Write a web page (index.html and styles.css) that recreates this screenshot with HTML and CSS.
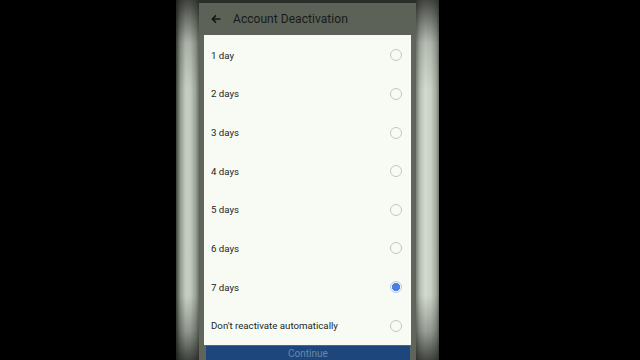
FILE: index.html
```html
<!DOCTYPE html>
<html lang="en">
<head>
<meta charset="utf-8">
<title>Account Deactivation</title>
<link rel="stylesheet" href="styles.css">
</head>
<body>
<div class="stage">
  <div class="side side-left"></div>
  <div class="phone">
    <div class="status"></div>
    <div class="appbar">
      <svg class="back" width="10" height="10" viewBox="0 0 10 10" aria-hidden="true">
        <path d="M9.5 5H1.8M5 1.4L1.4 5L5 8.6" fill="none" stroke="#141613" stroke-width="1.6"/>
      </svg>
      <span class="title">Account Deactivation</span>
    </div>
    <div class="content">
      <div class="card">
        <div class="row"><span>1 day</span><span class="radio"></span></div>
        <div class="row"><span>2 days</span><span class="radio"></span></div>
        <div class="row"><span>3 days</span><span class="radio"></span></div>
        <div class="row"><span>4 days</span><span class="radio"></span></div>
        <div class="row"><span>5 days</span><span class="radio"></span></div>
        <div class="row"><span>6 days</span><span class="radio"></span></div>
        <div class="row"><span>7 days</span><span class="radio checked"></span></div>
        <div class="row"><span>Don't reactivate automatically</span><span class="radio"></span></div>
      </div>
      <div class="continue">Continue</div>
    </div>
  </div>
  <div class="side side-right"></div>
</div>
</body>
</html>
```
FILE: styles.css
```css
html, body {
  margin: 0;
  padding: 0;
  background: #000;
}
.stage {
  width: 640px;
  height: 360px;
  overflow: hidden;
  display: flex;
  padding-left: 176px;
  box-sizing: border-box;
  font-family: Roboto, "Liberation Sans", sans-serif;
}
.side {
  width: 23px;
  height: 360px;
  flex: none;
}
.side-left {
  background:
    linear-gradient(to bottom, rgba(20,22,18,0.75) 0%, rgba(20,22,18,0.15) 12%, rgba(0,0,0,0) 25%, rgba(0,0,0,0) 82%, rgba(20,22,18,0.3) 92%, rgba(20,22,18,0.75) 100%),
    linear-gradient(to right, #3c403a 0%, #8f968b 18%, #c6cec3 42%, #c3cbc0 62%, #9ba297 85%, #6a6f66 100%);
}
.side-right {
  background:
    linear-gradient(to bottom, rgba(20,22,18,0.75) 0%, rgba(20,22,18,0.15) 12%, rgba(0,0,0,0) 25%, rgba(0,0,0,0) 82%, rgba(20,22,18,0.3) 92%, rgba(20,22,18,0.75) 100%),
    linear-gradient(to right, #7b8177 0%, #b6bdb2 18%, #d3dad0 40%, #c8d0c5 65%, #a2a99f 88%, #6f756c 100%);
}
.phone {
  width: 217px;
  height: 360px;
  flex: none;
  display: flex;
  flex-direction: column;
  overflow: hidden;
  background: #60655c;
}
.status {
  flex: none;
  height: 3px;
  background: #2a2d28;
}
.appbar {
  flex: none;
  height: 32px;
  display: flex;
  align-items: center;
  padding-left: 12px;
  gap: 12px;
  background: #5d6259;
}
.back {
  display: block;
}
.title {
  font-size: 12px;
  color: #181b17;
  letter-spacing: 0.05px;
}
.content {
  flex: none;
  padding: 0 5px;
  display: flex;
  flex-direction: column;
}
.card {
  flex: none;
  height: 310px;
  padding-top: 1px;
  box-sizing: border-box;
  background: #f7fbf3;
  display: flex;
  flex-direction: column;
}
.row {
  flex: 1;
  display: flex;
  align-items: center;
  justify-content: space-between;
  padding: 0 9px 0 7px;
  font-size: 9.7px;
  color: #22261f;
}
.radio {
  width: 10px;
  height: 10px;
  border: 1.2px solid #c4c8c1;
  border-radius: 50%;
  box-sizing: content-box;
}
.radio.checked {
  border-color: #b3c8ef;
  background: radial-gradient(circle, #4b7fdf 0 3.8px, #f7fbf3 4.4px 100%);
}
.continue {
  flex: none;
  margin: 1px 1px 0 2px;
  height: 24px;
  line-height: 16px;
  background: #1c467c;
  color: #6d86a9;
  font-size: 10px;
  text-align: center;
}
```
